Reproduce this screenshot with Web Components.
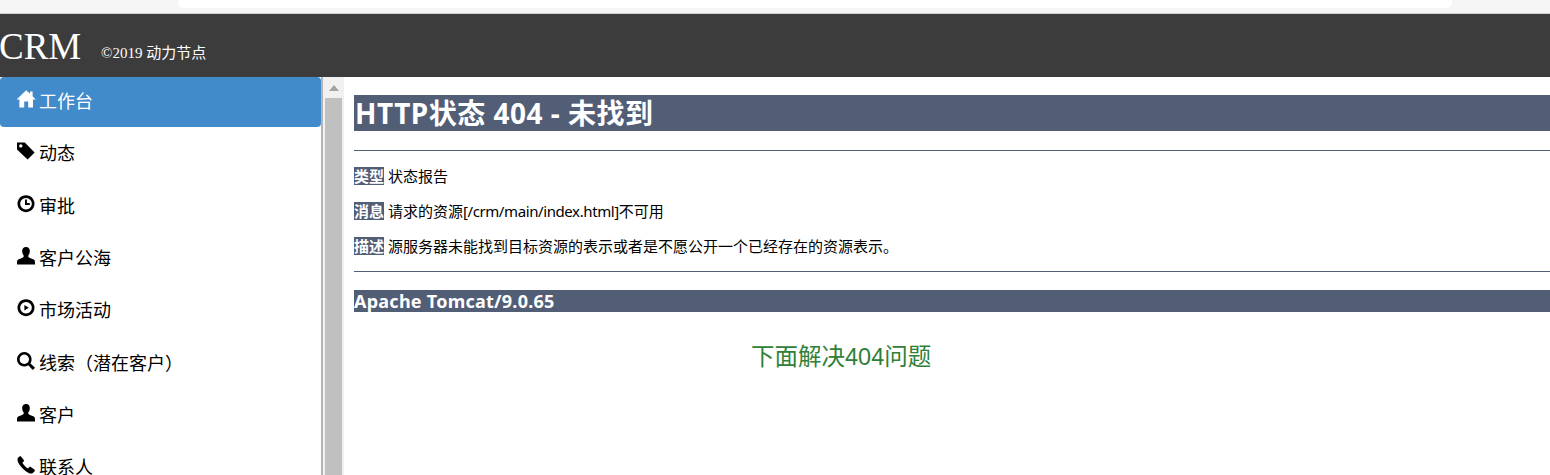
<!DOCTYPE html>
<html>
<head>
<meta charset="utf-8">
<title>CRM</title>
<style>
html, body { margin: 0; padding: 0; height: 100%; overflow: hidden; background: #fff; }
body { font-family: "Liberation Sans", "Noto Sans CJK SC", sans-serif; }
</style>
</head>
<body>
<crm-app>
    <browser-strip></browser-strip>
    <crm-header></crm-header>
    <crm-sidebar>
        <nav-item icon="home" active>工作台</nav-item>
        <nav-item icon="tag">动态</nav-item>
        <nav-item icon="time">审批</nav-item>
        <nav-item icon="user">客户公海</nav-item>
        <nav-item icon="play">市场活动</nav-item>
        <nav-item icon="search">线索（潜在客户）</nav-item>
        <nav-item icon="user">客户</nav-item>
        <nav-item icon="phone">联系人</nav-item>
    </crm-sidebar>
    <fake-scrollbar></fake-scrollbar>
    <error-page></error-page>
</crm-app>

<script>
// 图标
const ICONS = {
    home: '<path d="M9.2 .2 L13 3.8 V1.6 H15.6 V6.3 L18.8 9.4 H16 V17.6 H11.2 V11.6 H7.2 V17.6 H2.4 V9.4 H-.4 Z"/>',
    tag: '<path fill-rule="evenodd" d="M0 .5 H7.8 L17.6 10.4 L10.6 17.6 L0 7.6 Z M3.8 2.2 A1.7 1.7 0 1 0 3.81 5.6 A1.7 1.7 0 1 0 3.8 2.2 Z"/>',
    time: '<path fill-rule="evenodd" d="M9 .2 A8.5 8.5 0 1 1 8.99 .2 Z M9 2.9 A5.8 5.8 0 1 0 9.01 2.9 Z"/><path d="M8 4.5 H9.9 V8 H12.8 V9.9 H8 Z"/>',
    user: '<path d="M9 0 C11.9 0 13 2.2 12.8 4.6 C12.7 6.4 12 7.8 11.2 8.8 C11 10 12 10.6 13.6 11.2 C16.4 12.2 18 12.6 18 15 V17.6 H0 V15 C0 12.6 1.6 12.2 4.4 11.2 C6 10.6 7 10 6.8 8.8 C6 7.8 5.3 6.4 5.2 4.6 C5 2.2 6.1 0 9 0 Z"/>',
    play: '<path fill-rule="evenodd" d="M9 .2 A8.5 8.5 0 1 1 8.99 .2 Z M9 2.9 A5.8 5.8 0 1 0 9.01 2.9 Z"/><path d="M7.4 6 L11.8 8.7 L7.4 11.4 Z"/>',
    search: '<path fill-rule="evenodd" d="M7.3 0 A7.3 7.3 0 1 1 7.29 0 Z M7.3 2.6 A4.7 4.7 0 1 0 7.31 2.6 Z"/><path d="M11 13 L13 11 L18 15.8 L15.8 18 Z"/>',
    phone: '<path d="M4 .4 L6.8 4 C7.2 4.6 7 5.2 6.6 5.6 L5.4 6.8 C6.2 8.6 9.2 11.6 11 12.4 L12.2 11.2 C12.6 10.8 13.2 10.6 13.8 11 L17.4 13.6 C18 14.1 18 14.9 17.4 15.5 L15.8 17 C14.4 18.2 11.4 17.6 7.6 14.2 C3.4 10.4 -.2 6 .6 2.8 C.8 1.8 1.8 1.1 2.4 .6 C3 .1 3.6 0 4 .4 Z"/>'
};

class CrmApp extends HTMLElement {
    constructor() {
        super();
        let root = this.attachShadow({mode: 'open'});
        root.innerHTML = `
            <style>
                :host {
                    display: grid;
                    grid-template-columns: 321px 23px 1fr;
                    grid-template-rows: 14px 63px 1fr;
                    width: 1550px;
                    height: 475px;
                    overflow: hidden;
                }
                ::slotted(browser-strip), ::slotted(crm-header) { grid-column: 1 / -1; }
            </style>
            <slot></slot>
        `;
    }
}

class BrowserStrip extends HTMLElement {
    constructor() {
        super();
        let root = this.attachShadow({mode: 'open'});
        root.innerHTML = `
            <style>
                :host {
                    display: block;
                    background: #f6f6f6;
                    border-bottom: 1px solid #d0d0d0;
                    box-sizing: border-box;
                    padding-left: 178px;
                    padding-right: 98px;
                }
                div {
                    height: 8px;
                    background: #fff;
                    border-radius: 0 0 6px 6px;
                }
            </style>
            <div></div>
        `;
    }
}

class CrmHeader extends HTMLElement {
    constructor() {
        super();
        let root = this.attachShadow({mode: 'open'});
        root.innerHTML = `
            <style>
                :host {
                    display: flex;
                    align-items: flex-end;
                    background: #3c3c3c;
                    color: #fff;
                    font-family: "Liberation Serif", "Noto Sans CJK SC", serif;
                    overflow: hidden;
                }
                .logo { font-size: 37px; line-height: 41px; margin: 0 0 10px -1px; width: 102px; }
                .copy { font-size: 15px; line-height: 16px; margin-bottom: 16px; }
            </style>
            <span class="logo">CRM</span>
            <span class="copy">©2019 动力节点</span>
        `;
    }
}

class CrmSidebar extends HTMLElement {
    constructor() {
        super();
        let root = this.attachShadow({mode: 'open'});
        root.innerHTML = `
            <style>
                :host { display: flex; flex-direction: column; gap: 2px; overflow: hidden; background: #fff; }
            </style>
            <slot></slot>
        `;
    }
}

class NavItem extends HTMLElement {
    constructor() {
        super();
        let root = this.attachShadow({mode: 'open'});
        let icon = ICONS[this.getAttribute('icon')];
        root.innerHTML = `
            <style>
                :host {
                    display: flex;
                    align-items: center;
                    flex: none;
                    height: 50.33px;
                    box-sizing: border-box;
                    padding: 0 17px 4px;
                    gap: 4px;
                    font-size: 18px;
                    color: #000;
                    border-radius: 4px;
                }
                :host([active]) { background: #428bca; color: #fff; }
                svg { width: 18px; height: 18px; fill: currentColor; flex: none; margin-top: -2px; overflow: visible; }
            </style>
            <svg viewBox="0 0 18 18">${icon}</svg>
            <span><slot></slot></span>
        `;
    }
}

class FakeScrollbar extends HTMLElement {
    constructor() {
        super();
        let root = this.attachShadow({mode: 'open'});
        root.innerHTML = `
            <style>
                :host {
                    display: flex;
                    flex-direction: column;
                    border-left: 2px solid #b4b4b4;
                    background: #f1f1f1;
                    padding: 0 2px;
                    box-sizing: border-box;
                }
                .btn { height: 21px; display: flex; justify-content: center; padding-top: 8px; box-sizing: border-box; }
                .arrow { width: 0; height: 0; border: 5px solid transparent; border-top: 0; border-bottom: 6px solid #a3a3a3; }
                .thumb { flex: 1; background: #c0c0c0; }
            </style>
            <div class="btn"><div class="arrow"></div></div>
            <div class="thumb"></div>
        `;
    }
}

class ErrorPage extends HTMLElement {
    constructor() {
        super();
        let root = this.attachShadow({mode: 'open'});
        root.innerHTML = `
            <style>
                :host {
                    display: block;
                    overflow: hidden;
                    padding: 18px 0 0 10px;
                    font-family: "Noto Sans", "Noto Sans CJK SC", sans-serif;
                    font-size: 15px;
                    color: #000;
                    background: #fff;
                }
                h1 { margin: 0; padding-left: 1px; background: #525d76; color: #fff; font-size: 28px; letter-spacing: .5px; line-height: 36px; font-weight: bold; height: 36px; }
                hr { margin: 19px 0 0; height: 1px; border: 0; background: #525d76; }
                p { margin: 0; line-height: 18px; height: 18px; }
                .rows { display: flex; flex-direction: column; gap: 17px; margin: 16px 0; }
                .rows + hr { margin-top: 0; }
                b { display: inline-block; height: 18px; background: #525d76; color: #fff; }
                .path { letter-spacing: -.4px; }
                h3 { margin: 18px 0 0; background: #525d76; color: #fff; font-size: 18px; letter-spacing: .25px; line-height: 22px; height: 22px; font-weight: bold; }
                .fix { margin: 30px 0 0 397px; color: #2f8038; font-family: "Liberation Sans", "Noto Sans CJK SC", sans-serif; font-size: 23.5px; line-height: 30px; }
            </style>
            <h1>HTTP状态 404 - 未找到</h1>
            <hr>
            <div class="rows">
                <p><b>类型</b> 状态报告</p>
                <p><b>消息</b> 请求的资源<span class="path">[/crm/main/index.html]</span>不可用</p>
                <p><b>描述</b> 源服务器未能找到目标资源的表示或者是不愿公开一个已经存在的资源表示。</p>
            </div>
            <hr>
            <h3>Apache Tomcat/9.0.65</h3>
            <div class="fix">下面解决404问题</div>
        `;
    }
}

customElements.define('crm-app', CrmApp);
customElements.define('browser-strip', BrowserStrip);
customElements.define('crm-header', CrmHeader);
customElements.define('crm-sidebar', CrmSidebar);
customElements.define('nav-item', NavItem);
customElements.define('fake-scrollbar', FakeScrollbar);
customElements.define('error-page', ErrorPage);
</script>
</body>
</html>
